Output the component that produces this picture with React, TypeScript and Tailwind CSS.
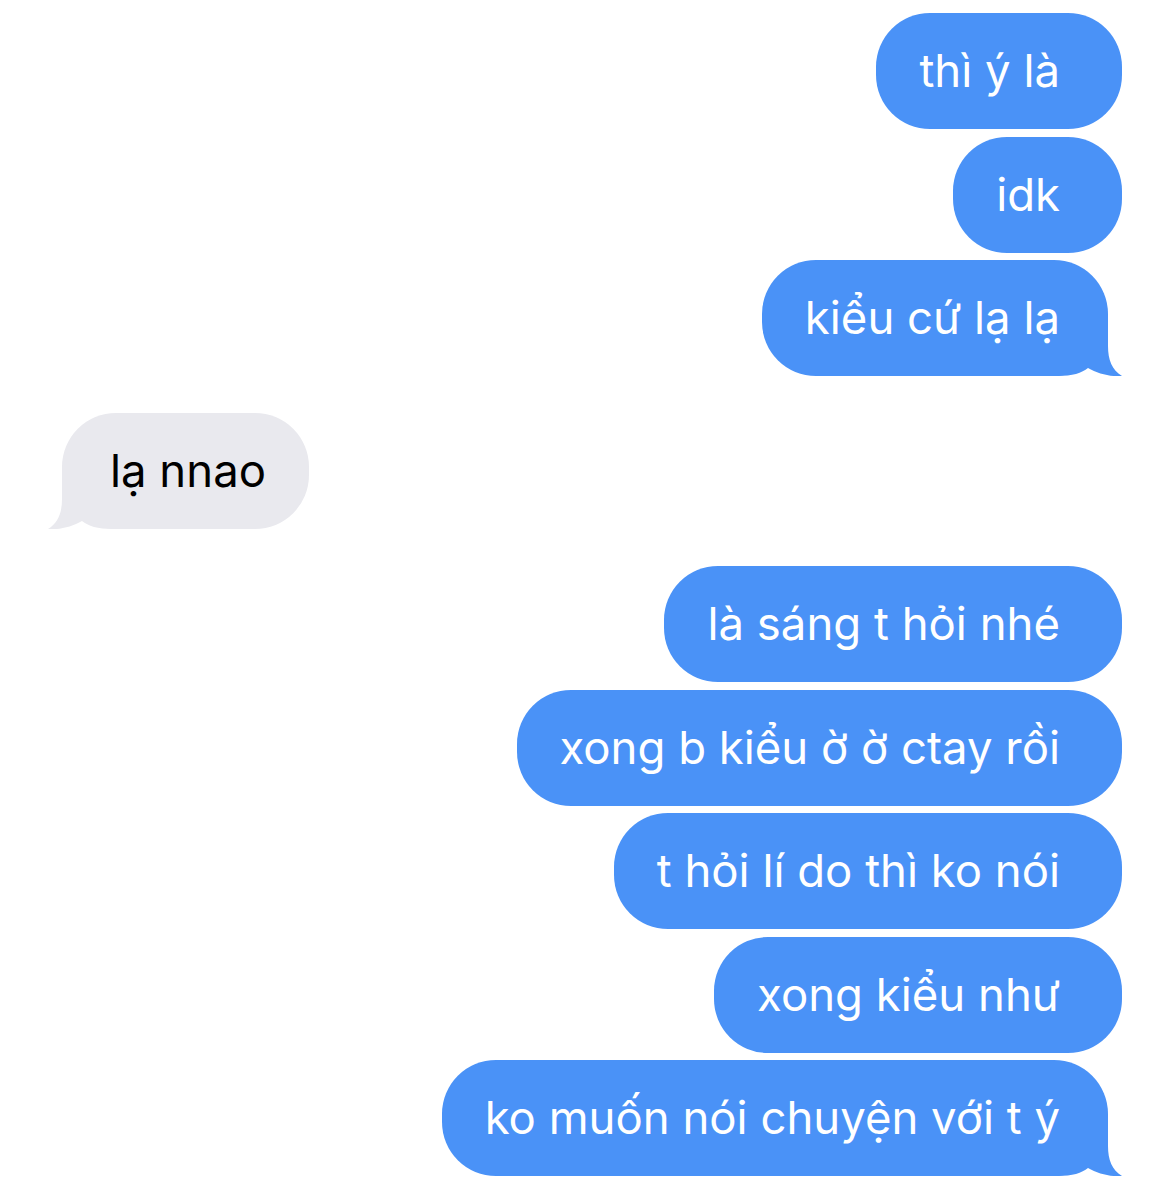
import type { ReactNode } from "react";

type Msg = { text: string; me: boolean; tail?: boolean };

const groups: Msg[][] = [
  [
    { text: "thì ý là", me: true },
    { text: "idk", me: true },
    { text: "kiểu cứ lạ lạ", me: true, tail: true },
  ],
  [{ text: "lạ nnao", me: false, tail: true }],
  [
    { text: "là sáng t hỏi nhé", me: true },
    { text: "xong b kiểu ờ ờ ctay rồi", me: true },
    { text: "t hỏi lí do thì ko nói", me: true },
    { text: "xong kiểu như", me: true },
    { text: "ko muốn nói chuyện với t ý", me: true, tail: true },
  ],
];

// bubble tail, drawn for the right side; flipped for incoming messages
function Tail({ className }: { className: string }) {
  return (
    <svg
      className={className}
      width="72"
      height="60"
      viewBox="0 0 72 60"
      fill="currentColor"
    >
      <path d="M58 0 L58 30 C58 44 62 54 72 60 C62 61 48 58 38 52 C32 57 22 60 8 60 L0 60 L0 0 Z" />
    </svg>
  );
}

function Bubble({ msg }: { msg: Msg }): ReactNode {
  if (msg.me) {
    return (
      <div
        className={
          "relative flex h-[116px] items-center rounded-[54px] bg-[#4a92f7] pl-[43px] text-white " +
          (msg.tail ? "mr-[14px] pr-[48px]" : "pr-[62px]")
        }
      >
        {msg.tail && (
          <Tail className="pointer-events-none absolute bottom-0 right-[-14px] text-[#4a92f7]" />
        )}
        <span className="relative whitespace-nowrap">{msg.text}</span>
      </div>
    );
  }
  return (
    <div className="relative ml-[14px] flex h-[116px] items-center rounded-[54px] bg-[#e9e9ee] pl-[48px] pr-[43px] text-black">
      <Tail className="pointer-events-none absolute bottom-0 left-[-14px] -scale-x-100 text-[#e9e9ee]" />
      <span className="relative whitespace-nowrap">{msg.text}</span>
    </div>
  );
}

export default function App() {
  return (
    <div className="min-h-[1192px] w-[1170px] bg-white px-[48px] pt-[13px] font-['Inter','Noto_Sans',sans-serif] text-[45.5px] leading-none">
      <div className="flex flex-col gap-[37px]">
        {groups.map((g, i) => (
          <div
            key={i}
            className={
              "flex flex-col gap-[7.5px] " + (g[0].me ? "items-end" : "items-start")
            }
          >
            {g.map((m, j) => (
              <Bubble key={j} msg={m} />
            ))}
          </div>
        ))}
      </div>
    </div>
  );
}
